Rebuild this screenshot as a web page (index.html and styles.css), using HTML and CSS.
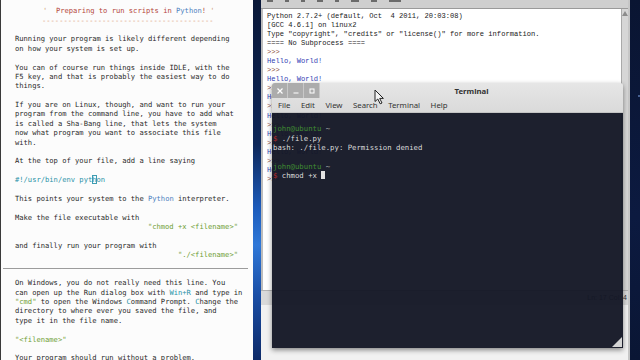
FILE: index.html
```html
<!DOCTYPE html>
<html lang="en">
<head>
    <meta charset="UTF-8">
    <title>Preparing to run scripts in Python</title>
    <link rel="stylesheet" href="styles.css">
</head>
<body>

<div class="screen">

    <!-- tutorial notes on the left -->
    <div class="notes">
        <div class="notes-title"><span class="quote">'</span>&nbsp; <span class="warm">Preparing to run scripts in</span> <span class="py">Python</span><span class="warm">!</span> <span class="quote">'</span></div>
        <div class="notes-rule para">----------------------------------------</div>

        <div class="para">Running your program is likely different depending<br>on how your system is set up.</div>
        <div class="para">You can of course run things inside IDLE, with the<br>F5 key, and that is probably the easiest way to do<br>things.</div>
        <div class="para">If you are on Linux, though, and want to run your<br>program from the command line, you have to add what<br>is called a Sha-Bang line, that lets the system<br>now what program you want to associate this file<br>with.</div>
        <div class="para">At the top of your file, add a line saying</div>
        <div class="para kw">#!/usr/bin/env pyt<span class="caret">h</span>on</div>
        <div class="para">This points your system to the <span class="py">Python</span> interpreter.</div>
        <div class="para">
            <div>Make the file executable with</div>
            <div class="right str">"chmod +x &lt;filename&gt;"</div>
        </div>
        <div>
            <div>and finally run your program with</div>
            <div class="right str">"./&lt;filename&gt;"</div>
        </div>

        <hr class="notes-hr">

        <div class="para">On Windows, you do not really need this line. You<br>can open up the Run dialog box with <span class="kw">Win+R</span> and type in<br><span class="str">"cmd"</span> to open the Windows <span class="kw">C</span>ommand Prompt. <span class="kw">C</span>hange the<br>directory to where ever you saved the file, and<br>type it in the file name.</div>
        <div class="para str">"&lt;filename&gt;"</div>
        <div class="para">Your program should run without a problem.</div>
    </div>

    <div class="desk"></div>

    <!-- IDLE shell window -->
    <div class="idle">
        <div class="idle-toolbar">
            <span class="tb w6"></span><span class="tb"></span><span class="tb"></span><span class="tb w6"></span>
            <span class="tb"></span><span class="tb w8"></span><span class="tb w6"></span><span class="tb w12"></span>
        </div>
        <div class="idle-main">
<pre class="idle-text">Python 2.7.2+ (default, Oct  4 2011, 20:03:08)
[GCC 4.6.1] on linux2
Type "copyright", "credits" or "license()" for more information.
==== No Subprocess ====
<span class="prompt">&gt;&gt;&gt;</span>
<span class="out">Hello, World!</span>
<span class="prompt">&gt;&gt;&gt;</span>
<span class="out">Hello, World!</span>
<span class="prompt">&gt;&gt;&gt;</span>
<span class="out">Hello, World!</span>
<span class="prompt">&gt;&gt;&gt;</span>
<span class="out">Hello, World!</span>
<span class="prompt">&gt;&gt;&gt;</span>
<span class="out">Hello, World!</span>
<span class="prompt">&gt;&gt;&gt;</span>
<span class="out">Hello, World!</span>
<span class="prompt">&gt;&gt;&gt;</span>
<span class="out">Hello, World!</span>
<span class="prompt">&gt;&gt;&gt;</span></pre>
            <div class="idle-scroll"><span class="scroll-up"></span></div>
        </div>
        <div class="idle-status">Ln: 17 Col: 4</div>
        <div class="idle-foot"></div>
    </div>

    <div class="desk-right"><span class="star"></span></div>

    <!-- terminal window on top -->
    <div class="terminal">
        <div class="term-head">
            <div class="term-bar">
                <div class="term-buttons">
                    <span class="term-btn">
                        <svg width="6" height="6" viewBox="0 0 6 6"><path d="M0.5 0.5 L5.5 5.5 M5.5 0.5 L0.5 5.5" stroke="#fff" stroke-width="1.2"/></svg>
                    </span>
                    <span class="term-btn">
                        <svg width="6" height="6" viewBox="0 0 6 6"><path d="M0.5 5 L5.5 5" stroke="#fff" stroke-width="1.2"/></svg>
                    </span>
                    <span class="term-btn">
                        <svg width="6" height="6" viewBox="0 0 6 6"><rect x="1" y="1" width="4" height="4" fill="none" stroke="#fff" stroke-width="1"/></svg>
                    </span>
                </div>
                <div class="term-title">Terminal</div>
            </div>
            <div class="term-menu">
                <span>File</span><span>Edit</span><span>View</span><span>Search</span><span>Terminal</span><span>Help</span>
            </div>
        </div>
<pre class="term-body">

<span class="user">john@ubuntu</span> <span class="dir">~</span>
<span class="dollar">$</span> ./file.py
bash: ./file.py: Permission denied

<span class="user">john@ubuntu</span> <span class="dir">~</span>
<span class="dollar">$</span> chmod +x <span class="block"></span></pre>
        <span class="grip"></span>
    </div>

    <svg class="pointer" width="11" height="16" viewBox="0 0 11 16">
        <path d="M1 1 L1 12.5 L3.8 10 L6.2 14.8 L8 14 L5.7 9.4 L9.4 9.4 Z" fill="#f4f4f4" stroke="#222" stroke-width="1" stroke-linejoin="round"/>
    </svg>

</div>

</body>
</html>
```

FILE: styles.css
```css
body {
    margin: 0;
    background: #0b1736;
}
.screen {
    position: relative;
    display: flex;
    width: 640px;
    height: 360px;
    overflow: hidden;
}

/* left notes panel */
.notes {
    box-sizing: border-box;
    flex-shrink: 0;
    width: 253px;
    height: 360px;
    padding: 6.3px 15px 0 14px;
    border-left: 1px solid #3a3a3a;
    background: #fcfcfc;
    color: #2a2a2a;
    font-family: "DejaVu Sans Mono", monospace;
    font-size: 7.13px;
    line-height: 9.375px;
    white-space: nowrap;
}
.notes-title {
    padding-left: 28px;
}
.notes-rule {
    padding-left: 27px;
    color: #d8946a;
}
.para {
    margin-bottom: 9.375px;
}
.right {
    text-align: right;
}
.quote {
    color: #c98c55;
}
.warm {
    color: #b5473c;
}
.py {
    color: #4c82c0;
}
.kw {
    color: #2b93a8;
}
.str {
    color: #6f9e34;
}
.caret {
    box-shadow: inset 0 0 0 1px #3f9db2;
}
.notes-hr {
    margin: 8.6px -10px 9.3px -12px;
    border: none;
    border-top: 1px solid #9c9c9c;
}

/* desktop background */
.desk {
    flex-shrink: 0;
    width: 8px;
    background: linear-gradient(to bottom, #0a1838 0%, #0d2658 40%, #1d5cbc 58%, #2f78d8 68%, #1a4ea6 82%, #0d2a68 100%);
}
.desk-right {
    position: relative;
    flex: 1;
    background: linear-gradient(to bottom, #0a1532, #0c1a40 60%, #0a1634);
}
.star {
    position: absolute;
    top: 95px;
    left: 8px;
    width: 2px;
    height: 2px;
    border-radius: 50%;
    background: #5d7ab0;
}

/* IDLE shell */
.idle {
    display: flex;
    flex-direction: column;
    flex-shrink: 0;
    width: 367px;
    background: #efefef;
    border-right: 2px solid #c6c6c6;
}
.idle-toolbar {
    display: flex;
    gap: 12px;
    height: 8px;
    padding-left: 6px;
    background: #cfcfcf;
    border-bottom: 1px solid #9a9a9a;
}
.tb {
    width: 4px;
    height: 2px;
    background: #6b6b6b;
}
.tb.w6 {
    width: 6px;
}
.tb.w8 {
    width: 8px;
}
.tb.w12 {
    width: 12px;
}
.idle-main {
    display: flex;
    height: 281px;
}
.idle-text {
    flex: 1;
    margin: 0;
    padding: 2.5px 0 0 4px;
    background: #ffffff;
    border-left: 2px solid #bdbdbd;
    color: #1a1a1a;
    font-family: "Liberation Mono", monospace;
    font-size: 7.1px;
    line-height: 9.1px;
    overflow: hidden;
}
.prompt {
    color: #8a4e3e;
}
.out {
    color: #3343b4;
}
.idle-scroll {
    width: 6px;
    background: #d6d6d6;
    border-left: 1px solid #a9a9a9;
}
.scroll-up {
    display: block;
    width: 0;
    height: 0;
    margin: 2px auto 0;
    border-left: 3px solid transparent;
    border-right: 3px solid transparent;
    border-bottom: 5px solid #8c8c8c;
}
.idle-status {
    height: 14px;
    padding-right: 1px;
    background: #d9d9d9;
    border-top: 1px solid #b2b2b2;
    color: #333;
    font-family: "Liberation Sans", sans-serif;
    font-size: 7px;
    line-height: 14px;
    text-align: right;
}
.idle-foot {
    flex: 1;
    background: #f1f1f1;
}

/* terminal window */
.terminal {
    position: absolute;
    left: 272px;
    top: 83px;
    display: flex;
    flex-direction: column;
    width: 351px;
    height: 265px;
    border-radius: 3px 3px 0 0;
    overflow: hidden;
    box-shadow: 0 2px 5px rgba(0, 0, 0, 0.45);
}
.term-head {
    background: linear-gradient(to bottom, #e6e6e6, #dadada);
    color: #333;
    font-family: "Noto Sans", sans-serif;
    font-size: 7.8px;
    border-bottom: 1px solid #c4c4c4;
}
.term-bar {
    display: flex;
    height: 16px;
}
.term-buttons {
    display: flex;
    height: 15px;
}
.term-btn {
    display: flex;
    align-items: center;
    justify-content: center;
    width: 15px;
    background: #acacac;
    border-right: 1px solid #c8c8c8;
}
.term-title {
    flex: 1;
    text-align: center;
    font-weight: bold;
    line-height: 17px;
}
.term-menu {
    display: flex;
    gap: 10.5px;
    height: 13px;
    padding-left: 6px;
    line-height: 13px;
}
.term-body {
    flex: 1;
    margin: 0;
    padding: 2px 1px 0;
    background: rgba(20, 23, 37, 0.96);
    color: #dcdcdc;
    font-family: "DejaVu Sans Mono", monospace;
    font-size: 7.3px;
    line-height: 9.4px;
}
.user {
    color: #3f8a32;
}
.dir {
    color: #b9b9b9;
}
.dollar {
    color: #b42a2a;
}
.block {
    display: inline-block;
    width: 4px;
    height: 8px;
    vertical-align: -1px;
    background: #e2e2e2;
}
.grip {
    position: absolute;
    right: 1px;
    bottom: 1px;
    width: 0;
    height: 0;
    border-left: 10px solid transparent;
    border-bottom: 10px solid #d4d4d4;
}

.pointer {
    position: absolute;
    left: 374px;
    top: 89px;
}
```
